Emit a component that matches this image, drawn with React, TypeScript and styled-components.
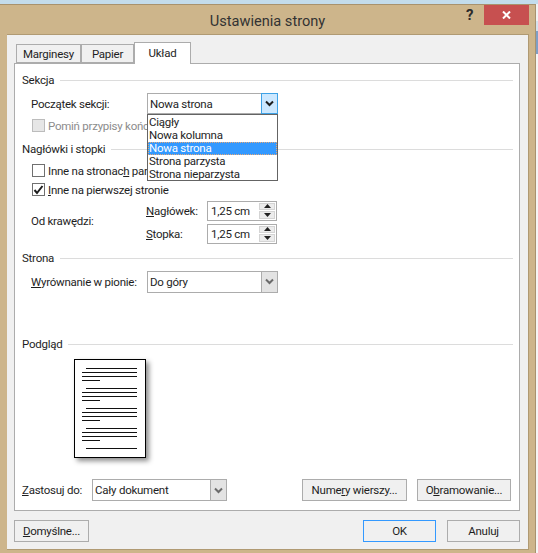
import styled, { createGlobalStyle } from 'styled-components';

const GlobalStyle = createGlobalStyle`
    html, body {
        margin: 0;
        padding: 0;
        background: #ffffff;
        overflow: hidden;
    }
    body {
        font-family: Roboto, "Noto Sans", sans-serif;
        font-size: 11.5px;
        letter-spacing: -0.25px;
        color: #1e1e1e;
    }
    * {
        box-sizing: border-box;
    }
`;

const Desktop = styled.div`
    width: 538px;
    height: 553px;
    padding-top: 4px;
    overflow: hidden;
    background: linear-gradient(
        180deg,
        #c3dcec 0,
        #c3dcec 4px,
        #f2f2f2 4px,
        #f2f2f2 21px,
        #d5e2ee 21px,
        #d5e2ee 31px,
        #7f9fc6 31px,
        #7f9fc6 54px,
        #f5f5f5 54px
    );
`;

const DialogWindow = styled.div`
    position: relative;
    width: 536px;
    height: 549px;
    display: flex;
    flex-direction: column;
    background: #cdb58b;
    border-top: 1px solid #a8926e;
    border-right: 1px solid #a8926e;
`;

const TitleBar = styled.div`
    height: 29px;
    flex: none;
    display: flex;
    align-items: center;
    justify-content: center;
    padding-top: 3px;
    font-size: 14.6px;
    letter-spacing: 0;
    color: #333333;
`;

const HelpMark = styled.span`
    position: absolute;
    top: 1px;
    left: 466px;
    font-size: 15px;
    font-weight: 700;
    color: #2b2b2b;
`;

const CloseButton = styled.div`
    position: absolute;
    top: 0;
    left: 484px;
    width: 45px;
    height: 20px;
    display: flex;
    align-items: center;
    justify-content: center;
    background: #c75050;
`;

const Client = styled.div`
    flex: 1;
    margin: 0 6px 3px 7px;
    padding: 7px 6px 0 7px;
    display: flex;
    flex-direction: column;
    background: #f0f0f0;
    border: 1px solid #b09a73;
    border-left: none;
`;

const TabStrip = styled.div`
    height: 21px;
    flex: none;
    display: flex;
    align-items: flex-end;
    padding-left: 2px;
`;

const Tab = styled.div<{ $active?: boolean; $width: number }>`
    position: relative;
    width: ${(p) => p.$width}px;
    height: ${(p) => (p.$active ? 22 : 19)}px;
    margin-bottom: ${(p) => (p.$active ? -1 : 0)}px;
    display: flex;
    align-items: center;
    justify-content: center;
    padding-bottom: ${(p) => (p.$active ? 2 : 0)}px;
    background: ${(p) => (p.$active ? '#ffffff' : '#f0f0f0')};
    border: 1px solid #acacac;
    border-bottom: ${(p) => (p.$active ? 'none' : '1px solid #acacac')};
    z-index: ${(p) => (p.$active ? 1 : 0)};
`;

const Panel = styled.div`
    position: relative;
    width: 506px;
    height: 448px;
    flex: none;
    padding: 8px 6px 0 7px;
    background: #ffffff;
    border: 1px solid #acacac;
`;

const Legend = styled.div<{ $top?: number }>`
    height: 16px;
    margin-top: ${(p) => p.$top ?? 0}px;
    display: flex;
    align-items: center;
    gap: 6px;
    &::after {
        content: '';
        flex: 1;
        height: 1px;
        background: #dcdcdc;
    }
`;

const FieldRow = styled.div<{ $top?: number }>`
    height: 21px;
    margin-top: ${(p) => p.$top ?? 0}px;
    padding-left: 9px;
    display: flex;
    align-items: center;
`;

const FieldLabel = styled.span`
    width: 116px;
    flex: none;
    white-space: nowrap;
`;

const Select = styled.div<{ $width: number; $open?: boolean }>`
    width: ${(p) => p.$width}px;
    height: ${(p) => (p.$open ? 21 : 22)}px;
    display: flex;
    align-items: stretch;
    padding-left: 2px;
    background: #ffffff;
    border: 1px solid #acacac;
`;

const SelectValue = styled.span`
    flex: 1;
    display: flex;
    align-items: center;
    white-space: nowrap;
`;

const SelectButton = styled.span<{ $open?: boolean }>`
    width: 17px;
    display: flex;
    align-items: center;
    justify-content: center;
    background: ${(p) => (p.$open ? '#cce8ff' : '#e3e3e3')};
    border: 1px solid ${(p) => (p.$open ? '#3ea2e6' : '#acacac')};
    margin: -1px -1px -1px 0;
`;

const CheckRow = styled.div<{ $disabled?: boolean; $top?: number }>`
    height: 19px;
    margin-top: ${(p) => p.$top ?? 0}px;
    padding-left: 10px;
    display: flex;
    align-items: center;
    gap: 3px;
    white-space: nowrap;
    color: ${(p) => (p.$disabled ? '#8c8c8c' : 'inherit')};
`;

const CheckBox = styled.span<{ $disabled?: boolean }>`
    width: 13px;
    height: 13px;
    flex: none;
    display: flex;
    align-items: center;
    justify-content: center;
    background: ${(p) => (p.$disabled ? '#e6e6e6' : '#ffffff')};
    border: 1px solid ${(p) => (p.$disabled ? '#bcbcbc' : '#707070')};
`;

const DropdownList = styled.div`
    position: absolute;
    top: 50px;
    left: 132px;
    width: 131px;
    height: 67px;
    padding: 1px 0;
    background: #ffffff;
    border: 1px solid #646464;
    z-index: 2;
`;

const DropdownItem = styled.div<{ $selected?: boolean }>`
    height: 13px;
    padding-left: 1px;
    display: flex;
    align-items: center;
    line-height: 13px;
    color: ${(p) => (p.$selected ? '#ffffff' : 'inherit')};
    background: ${(p) => (p.$selected ? '#3399ff' : 'transparent')};
    outline: ${(p) => (p.$selected ? '1px dotted #e6a878' : 'none')};
    outline-offset: -1px;
`;

const OffsetBlock = styled.div`
    height: 44px;
    margin-top: 1px;
    padding-left: 9px;
    display: flex;
    align-items: center;
`;

const OffsetLabel = styled.span`
    width: 115px;
    flex: none;
    padding-bottom: 3px;
`;

const OffsetFields = styled.div`
    display: grid;
    grid-template-columns: 61px 70px;
    row-gap: 3px;
    align-items: center;
`;

const Spinner = styled.div`
    height: 20px;
    display: flex;
    align-items: stretch;
    padding-left: 3px;
    background: #ffffff;
    border: 1px solid #acacac;
`;

const SpinButtons = styled.div`
    width: 16px;
    margin: 1px;
    display: flex;
    flex-direction: column;
    gap: 1px;
`;

const SpinButton = styled.span`
    flex: 1;
    display: flex;
    align-items: center;
    justify-content: center;
    background: #ececec;
    border: 1px solid #d4d4d4;
`;

const PagePreview = styled.div`
    width: 72px;
    height: 99px;
    margin: 7px 0 0 52px;
    background: #ffffff;
    border: 1px solid #000000;
    box-shadow: 3px 3px 5px rgba(0, 0, 0, 0.45);
`;

const ApplyRow = styled.div`
    height: 22px;
    margin-top: 21px;
    display: flex;
    align-items: center;
`;

const ApplyLabel = styled.span`
    width: 70px;
    flex: none;
`;

const ApplyButtons = styled.div`
    margin-left: auto;
    margin-right: 2px;
    display: flex;
    gap: 10px;
`;

const Button = styled.div<{ $width: number; $primary?: boolean }>`
    width: ${(p) => p.$width}px;
    height: 22px;
    display: flex;
    align-items: center;
    justify-content: center;
    background: #f0f0f0;
    border: 1px solid ${(p) => (p.$primary ? '#3399ff' : '#acacac')};
`;

const Footer = styled.div`
    margin-top: 9px;
    width: 506px;
    display: flex;
    gap: 11px;
    > :first-child {
        margin-right: auto;
    }
`;

const Chevron = ({ color }: { color: string }) => (
    <svg width="9" height="7" viewBox="0 0 9 7">
        <path d="M1 1.5 L4.5 5 L8 1.5" fill="none" stroke={color} strokeWidth="2" />
    </svg>
);

const Arrow = ({ up }: { up?: boolean }) => (
    <svg width="7" height="4" viewBox="0 0 7 4">
        <path d={up ? 'M3.5 0 L7 4 L0 4 Z' : 'M0 0 L7 0 L3.5 4 Z'} fill="#222222" />
    </svg>
);

const textRows = [368, 388, 408, 428];

const PageLines = () => (
    <svg width="70" height="97" viewBox="75 360 70 97">
        {textRows.map((y) => (
            <g key={y} stroke="#111111" strokeWidth="1">
                <line x1="86" x2="137" y1={y + 0.5} y2={y + 0.5} />
                <line x1="82" x2="137" y1={y + 4.5} y2={y + 4.5} />
                <line x1="82" x2="137" y1={y + 8.5} y2={y + 8.5} />
                <line x1="82" x2="100" y1={y + 12.5} y2={y + 12.5} />
            </g>
        ))}
        <line x1="86" x2="137" y1="448.5" y2="448.5" stroke="#111111" strokeWidth="1" />
    </svg>
);

const App = () => {
    return (
        <Desktop>
            <GlobalStyle />
            <DialogWindow>
                <TitleBar>Ustawienia strony</TitleBar>
                <HelpMark>?</HelpMark>
                <CloseButton>
                    <svg width="9" height="8" viewBox="0 0 9 8">
                        <path d="M1 0.5 L8 7.5 M8 0.5 L1 7.5" stroke="#ffffff" strokeWidth="2" />
                    </svg>
                </CloseButton>
                <Client>
                    <TabStrip>
                        <Tab $width={65}>Marginesy</Tab>
                        <Tab $width={53}>Papier</Tab>
                        <Tab $width={57} $active>
                            Układ
                        </Tab>
                    </TabStrip>
                    <Panel>
                        <Legend>Sekcja</Legend>
                        <FieldRow $top={5}>
                            <FieldLabel>Początek sekcji:</FieldLabel>
                            <Select $width={131} $open>
                                <SelectValue>Nowa strona</SelectValue>
                                <SelectButton $open>
                                    <Chevron color="#1e1e1e" />
                                </SelectButton>
                            </Select>
                        </FieldRow>
                        <DropdownList>
                            <DropdownItem>Ciągły</DropdownItem>
                            <DropdownItem>Nowa kolumna</DropdownItem>
                            <DropdownItem $selected>Nowa strona</DropdownItem>
                            <DropdownItem>Strona parzysta</DropdownItem>
                            <DropdownItem>Strona nieparzysta</DropdownItem>
                        </DropdownList>
                        <CheckRow $disabled $top={2}>
                            <CheckBox $disabled />
                            Pomiń przypisy końcowe
                        </CheckRow>
                        <Legend $top={6}>Nagłówki i stopki</Legend>
                        <CheckRow $top={4}>
                            <CheckBox />
                            <span>
                                Inne na stronac<u>h</u> parzystych
                            </span>
                        </CheckRow>
                        <CheckRow>
                            <CheckBox>
                                <svg width="11" height="10" viewBox="0 0 11 10">
                                    <path d="M1.5 5 L4 8 L9.5 1" fill="none" stroke="#1e1e1e" strokeWidth="2" />
                                </svg>
                            </CheckBox>
                            <span>
                                <u>I</u>nne na pierwszej stronie
                            </span>
                        </CheckRow>
                        <OffsetBlock>
                            <OffsetLabel>Od krawędzi:</OffsetLabel>
                            <OffsetFields>
                                <span>
                                    <u>N</u>agłówek:
                                </span>
                                <Spinner>
                                    <SelectValue>1,25 cm</SelectValue>
                                    <SpinButtons>
                                        <SpinButton>
                                            <Arrow up />
                                        </SpinButton>
                                        <SpinButton>
                                            <Arrow />
                                        </SpinButton>
                                    </SpinButtons>
                                </Spinner>
                                <span>
                                    <u>S</u>topka:
                                </span>
                                <Spinner>
                                    <SelectValue>1,25 cm</SelectValue>
                                    <SpinButtons>
                                        <SpinButton>
                                            <Arrow up />
                                        </SpinButton>
                                        <SpinButton>
                                            <Arrow />
                                        </SpinButton>
                                    </SpinButtons>
                                </Spinner>
                            </OffsetFields>
                        </OffsetBlock>
                        <Legend $top={6}>Strona</Legend>
                        <FieldRow $top={5}>
                            <FieldLabel>
                                <u>W</u>yrównanie w pionie:
                            </FieldLabel>
                            <Select $width={131}>
                                <SelectValue>Do góry</SelectValue>
                                <SelectButton>
                                    <Chevron color="#6b6b6b" />
                                </SelectButton>
                            </Select>
                        </FieldRow>
                        <Legend $top={44}>Podgląd</Legend>
                        <PagePreview>
                            <PageLines />
                        </PagePreview>
                        <ApplyRow>
                            <ApplyLabel>
                                <u>Z</u>astosuj do:
                            </ApplyLabel>
                            <Select $width={135}>
                                <SelectValue>Cały dokument</SelectValue>
                                <SelectButton>
                                    <Chevron color="#6b6b6b" />
                                </SelectButton>
                            </Select>
                            <ApplyButtons>
                                <Button $width={105}>
                                    <span>
                                        Nume<u>r</u>y wierszy...
                                    </span>
                                </Button>
                                <Button $width={94}>
                                    <span>
                                        O<u>b</u>ramowanie...
                                    </span>
                                </Button>
                            </ApplyButtons>
                        </ApplyRow>
                    </Panel>
                    <Footer>
                        <Button $width={75}>
                            <span>
                                <u>D</u>omyślne...
                            </span>
                        </Button>
                        <Button $width={73} $primary>
                            OK
                        </Button>
                        <Button $width={73}>Anuluj</Button>
                    </Footer>
                </Client>
            </DialogWindow>
        </Desktop>
    );
};

export default App;
